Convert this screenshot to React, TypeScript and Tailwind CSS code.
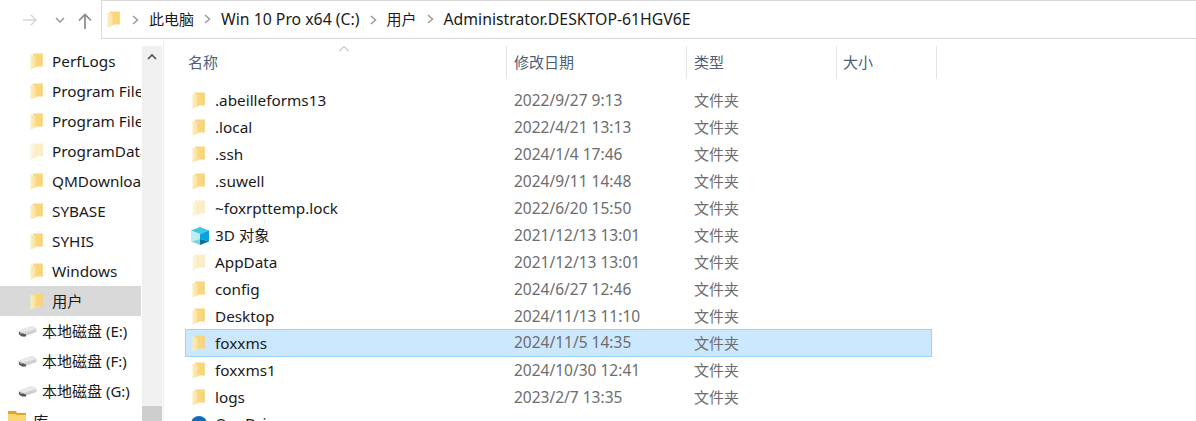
import React from 'react';

const font = '[font-family:"Noto_Sans","Noto_Sans_CJK_SC",sans-serif]';

function Folder({ pale = false }: { pale?: boolean }) {
  const id = pale ? 'folderPale' : 'folderSolid';
  return (
    <svg width="13" height="17" viewBox="0 0 13 17" className="shrink-0">
      <defs>
        <linearGradient id={id} x1="0" y1="0" x2="1" y2="0">
          <stop offset="0" stopColor={pale ? '#fdf6df' : '#fdedb8'} />
          <stop offset="1" stopColor={pale ? '#fbeec8' : '#fce09a'} />
        </linearGradient>
      </defs>
      <path d="M3 0.5 H12.5 V13.5 H3 Z" fill={pale ? '#fcefc8' : '#fad67a'} />
      <path d="M12.5 0.5 V13.5 H11.5 V0.5 Z" fill={pale ? '#f9e6b0' : '#f6cd63'} />
      <path d="M0.5 1.5 L6.5 3 V14 L1 16.5 H0.5 Z" fill={`url(#${id})`} />
      <path d="M6.5 3 V14 L5.5 14.5 V3 Z" fill={pale ? '#f7e8bb' : '#f5d684'} />
    </svg>
  );
}

function Cube() {
  return (
    <svg width="20" height="20" viewBox="0 0 20 20" className="shrink-0">
      <path d="M10 1 L19 4.5 L10 8 L1 4.5 Z" fill="#3fc6e2" />
      <path d="M1 4.5 L10 8 V13 L1 15.5 Z" fill="#bdeef2" />
      <path d="M10 8 L19 4.5 V15.5 L10 13 Z" fill="#0aa2dc" />
      <path d="M1 15.5 L10 13 V19 Z" fill="#7fd3dc" />
      <path d="M19 15.5 L10 13 V19 Z" fill="#0f6f9f" />
    </svg>
  );
}

function Disk() {
  return (
    <svg width="19" height="11" viewBox="0 0 19 11" className="shrink-0">
      <path d="M0.5 5 L12 0.5 H15.5 L18.5 3 V6 L6 10.5 H4 L0.5 8 Z" fill="#cfcfcf" />
      <path d="M0.5 5 L5 7 L18.5 3 L15.5 0.5 H12 Z" fill="#e8e8e8" />
      <path d="M1 6 L8 8.5 V10.5 H4 L1 8.5 Z" fill="#55595a" />
      <rect x="2" y="7" width="2" height="1" fill="#63c56a" />
    </svg>
  );
}

function Library() {
  return (
    <svg width="18" height="18" viewBox="0 0 18 18" className="shrink-0">
      <path d="M0 0 H8 L9 2 H18 V18 H0 Z" fill="#e0a526" />
      <path d="M0 3 H8 L9 4 H18 V18 H0 Z" fill="#fbd675" />
    </svg>
  );
}

const sideFolders: { name: string; pale?: boolean; active?: boolean }[] = [
  { name: 'PerfLogs' },
  { name: 'Program Files' },
  { name: 'Program Files (x86)' },
  { name: 'ProgramData', pale: true },
  { name: 'QMDownload' },
  { name: 'SYBASE' },
  { name: 'SYHIS' },
  { name: 'Windows' },
  { name: '用户', active: true },
];

const drives = ['本地磁盘 (E:)', '本地磁盘 (F:)', '本地磁盘 (G:)'];

const files: { name: string; date: string; pale?: boolean; cube?: boolean; selected?: boolean }[] = [
  { name: '.abeilleforms13', date: '2022/9/27 9:13' },
  { name: '.local', date: '2022/4/21 13:13' },
  { name: '.ssh', date: '2024/1/4 17:46' },
  { name: '.suwell', date: '2024/9/11 14:48' },
  { name: '~foxrpttemp.lock', date: '2022/6/20 15:50', pale: true },
  { name: '3D 对象', date: '2021/12/13 13:01', cube: true },
  { name: 'AppData', date: '2021/12/13 13:01', pale: true },
  { name: 'config', date: '2024/6/27 12:46' },
  { name: 'Desktop', date: '2024/11/13 11:10' },
  { name: 'foxxms', date: '2024/11/5 14:35', selected: true },
  { name: 'foxxms1', date: '2024/10/30 12:41' },
  { name: 'logs', date: '2023/2/7 13:35' },
];

const crumbs: { label: string; cjk?: boolean }[] = [
  { label: '此电脑', cjk: true },
  { label: 'Win 10 Pro x64 (C:)' },
  { label: '用户', cjk: true },
  { label: 'Administrator.DESKTOP-61HGV6E' },
];

function Chevron() {
  return (
    <svg width="7" height="10" viewBox="0 0 7 10" className="shrink-0">
      <path d="M1 1 L5.5 5 L1 9" fill="none" stroke="#9a9a9a" strokeWidth="1.5" />
    </svg>
  );
}

export default function App() {
  return (
    <div className={`h-[421px] w-[1196px] overflow-hidden bg-white text-[15.3px] text-[#1a1a1a] ${font}`}>
      <div className="flex h-[39px] items-center">
        <div className="flex h-full w-[101px] shrink-0 items-center">
          <svg width="16" height="14" viewBox="0 0 16 14" className="ml-[22px]">
            <path d="M1 7 H14 M9 2 L14 7 L9 12" fill="none" stroke="#d4d4d4" strokeWidth="1.4" />
          </svg>
          <svg width="10" height="6" viewBox="0 0 10 6" className="ml-[17px]">
            <path d="M1 1 L5 5 L9 1" fill="none" stroke="#9a9a9a" strokeWidth="1.5" />
          </svg>
          <svg width="14" height="16" viewBox="0 0 14 16" className="ml-[13px] mt-[2px]">
            <path d="M7 16 V2 M1 7.5 L7 1.5 L13 7.5" fill="none" stroke="#8a8a8a" strokeWidth="1.7" />
          </svg>
        </div>
        <div className="flex h-full flex-1 items-center border border-r-0 border-[#d9d9d9]">
          <div className="ml-[5px] mr-[12px] flex"><Folder /></div>
          {crumbs.map((c) => (
            <div key={c.label} className="flex items-center">
              <Chevron />
              <span className={`mx-[10px] whitespace-nowrap leading-none ${c.cjk ? 'text-[15px]' : 'text-[15.8px]'}`}>{c.label}</span>
            </div>
          ))}
        </div>
      </div>
      <div className="flex h-[382px]">
        <div className="mt-[7px] mr-[1px] w-[141px] shrink-0 overflow-hidden">
          {sideFolders.map((f) => (
            <div key={f.name} className={`flex h-[30px] items-center pl-[30px] ${f.active ? 'bg-[#d9d9d9]' : ''}`}>
              <Folder pale={f.pale} />
              <span className="ml-[9px] whitespace-nowrap">{f.name}</span>
            </div>
          ))}
          {drives.map((d) => (
            <div key={d} className="flex h-[30px] items-center pl-[18px]">
              <Disk />
              <span className="ml-[5px] whitespace-nowrap text-[15px]">{d}</span>
            </div>
          ))}
          <div className="flex h-[30px] items-start pl-[8px] pt-[5px]">
            <Library />
            <span className="ml-[7px] -mt-[1px]">库</span>
          </div>
        </div>
        <div className="mt-[7px] flex w-[20px] shrink-0 flex-col justify-between bg-[#f0f0f0]">
          <div className="flex h-[19px] items-center justify-center pt-[2px]">
            <svg width="10" height="6" viewBox="0 0 10 6">
              <path d="M1 5 L5 1 L9 5" fill="none" stroke="#505050" strokeWidth="1.7" />
            </svg>
          </div>
          <div className="h-[15px] bg-[#cdcdcd]" />
        </div>
        <div className="relative ml-[1px] flex-1 border-l border-[#f0f0f0] pl-[21px]">
          <svg width="10" height="6" viewBox="0 0 10 6" className="absolute left-[175px] top-[7px]">
            <path d="M0.5 5 L5 0.5 L9.5 5" fill="none" stroke="#a0a0a0" />
          </svg>
          <div className="mt-[7px] flex h-[33px] items-stretch text-[15px] text-[#4c607a]">
            <div className="flex w-[321px] items-center pl-[3px]">名称</div>
            <div className="flex w-[180px] items-center border-l border-[#e5e5e5] pl-[7px]">修改日期</div>
            <div className="flex w-[150px] items-center border-l border-[#e5e5e5] pl-[7px]">类型</div>
            <div className="flex w-[101px] items-center border-x border-[#e5e5e5] pl-[6px]">大小</div>
          </div>
          <div className="mt-[8px] w-[747px]">
            {files.map((f) => (
              <div
                key={f.name}
                className={`flex items-center border ${f.selected ? '-mt-[1px] h-[28px] border-[#99d1ff] bg-[#cce8ff]' : 'h-[27px] border-transparent'}`}
              >
                <div className="flex w-[321px] items-center">
                  <div className={`flex w-[29px] ${f.cube ? 'pl-[4px]' : 'pl-[6px]'}`}>
                    {f.cube ? <Cube /> : <Folder pale={f.pale} />}
                  </div>
                  <span className="whitespace-nowrap">{f.name}</span>
                </div>
                <span className="w-[180px] pl-[7px] text-[15.5px] text-[#6d6d6d]">{f.date}</span>
                <span className="pl-[7px] text-[15px] text-[#6d6d6d]">文件夹</span>
              </div>
            ))}
            <div className="flex h-[27px] items-start pl-[5px] pt-[1px]">
              <svg width="20" height="20" viewBox="0 0 20 20" className="mt-[2px]"><circle cx="9" cy="10" r="8" fill="#0f6cbd" /></svg>
              <span className="ml-[5px]">OneDrive</span>
            </div>
          </div>
        </div>
      </div>
    </div>
  );
}
